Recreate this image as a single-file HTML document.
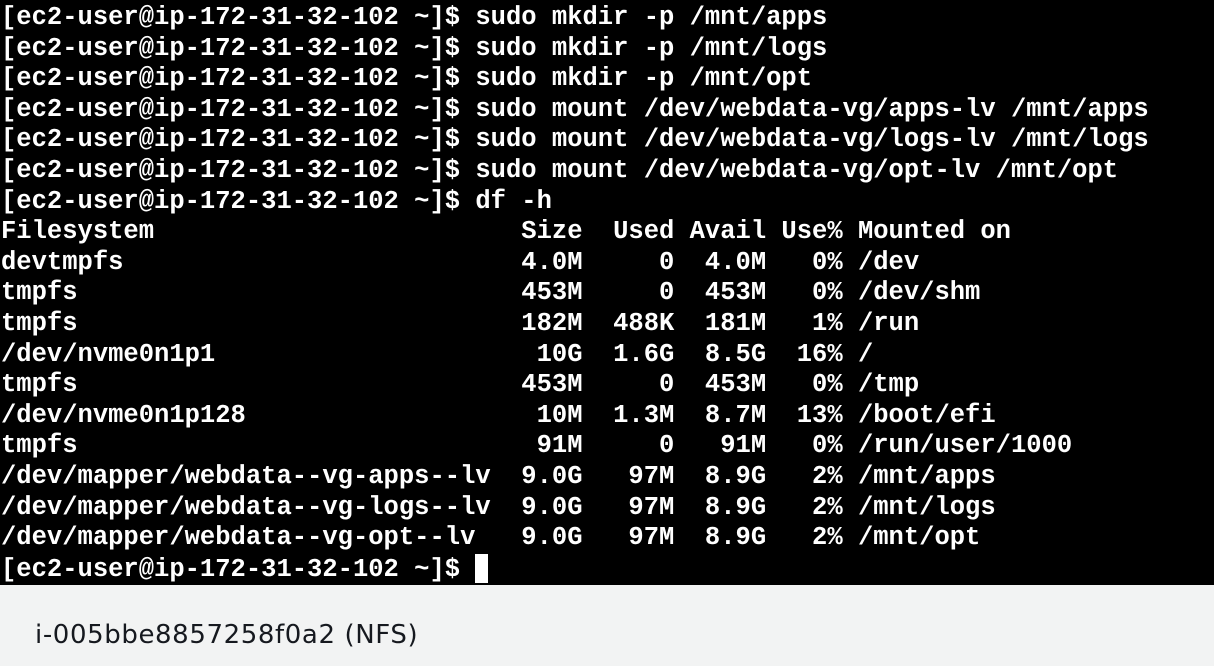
<!DOCTYPE html>
<html><head><style>
html,body{margin:0;padding:0;width:1214px;height:666px;overflow:hidden;background:#f2f3f3}
.t{position:absolute;left:0;top:0;width:1214px;height:585px;background:#000;overflow:hidden}
pre{margin:0;position:absolute;left:1px;top:3px;color:#fff;font:bold 25.5px/30.6px "Liberation Mono",monospace;white-space:pre}
.c{display:inline-block;width:13px;height:29px;background:#fff;vertical-align:-7px}
.l{position:absolute;left:35px;top:620px;font:26px/30px "DejaVu Sans","Liberation Sans",sans-serif;color:#16191f;letter-spacing:0.6px}
</style></head><body>
<div class="t"><pre>[ec2-user@ip-172-31-32-102 ~]$ sudo mkdir -p /mnt/apps
[ec2-user@ip-172-31-32-102 ~]$ sudo mkdir -p /mnt/logs
[ec2-user@ip-172-31-32-102 ~]$ sudo mkdir -p /mnt/opt
[ec2-user@ip-172-31-32-102 ~]$ sudo mount /dev/webdata-vg/apps-lv /mnt/apps
[ec2-user@ip-172-31-32-102 ~]$ sudo mount /dev/webdata-vg/logs-lv /mnt/logs
[ec2-user@ip-172-31-32-102 ~]$ sudo mount /dev/webdata-vg/opt-lv /mnt/opt
[ec2-user@ip-172-31-32-102 ~]$ df -h
Filesystem                        Size  Used Avail Use% Mounted on
devtmpfs                          4.0M     0  4.0M   0% /dev
tmpfs                             453M     0  453M   0% /dev/shm
tmpfs                             182M  488K  181M   1% /run
/dev/nvme0n1p1                     10G  1.6G  8.5G  16% /
tmpfs                             453M     0  453M   0% /tmp
/dev/nvme0n1p128                   10M  1.3M  8.7M  13% /boot/efi
tmpfs                              91M     0   91M   0% /run/user/1000
/dev/mapper/webdata--vg-apps--lv  9.0G   97M  8.9G   2% /mnt/apps
/dev/mapper/webdata--vg-logs--lv  9.0G   97M  8.9G   2% /mnt/logs
/dev/mapper/webdata--vg-opt--lv   9.0G   97M  8.9G   2% /mnt/opt
[ec2-user@ip-172-31-32-102 ~]$ <span class="c"></span></pre></div>
<div class="l">i-005bbe8857258f0a2 (NFS)</div>
</body></html>
